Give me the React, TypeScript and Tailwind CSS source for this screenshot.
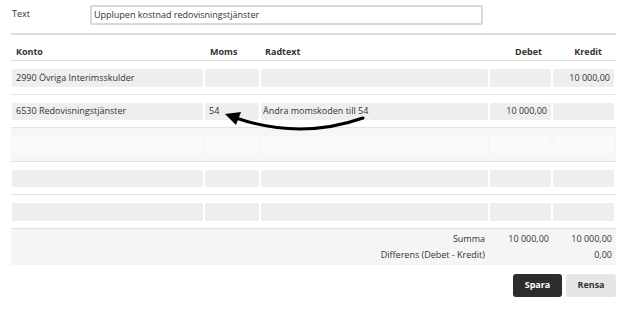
import React from "react";

const grid = "grid grid-cols-[191px_54px_227px_61px_61px] gap-x-[2px] pl-[1px]";

type Row = { cells: string[]; hover?: boolean };

const rows: Row[] = [
  { cells: ["2990 Övriga Interimsskulder", "", "", "", "10 000,00"] },
  { cells: ["6530 Redovisningstjänster", "54", "Ändra momskoden till 54", "10 000,00", ""] },
  { cells: ["", "", "", "", ""], hover: true },
  { cells: ["", "", "", "", ""] },
  { cells: ["", "", "", "", ""] },
];

const cellPad = ["pl-[4px]", "pl-[4px]", "pl-[2px]", "pr-[4px] justify-end", "pr-[4px] justify-end"];

export default function App() {
  return (
    <div
      className="relative w-[627px] h-[309px] bg-white text-[#333] text-[9px] leading-[12px] px-[11px] pt-[5px]"
      style={{ fontFamily: '"Open Sans", "Noto Sans", Arial, sans-serif' }}
    >
      {/* Text field */}
      <div className="flex items-center h-[20px]">
        <div className="w-[79px] pl-[1px] -mt-[3px]">Text</div>
        <div className="w-[393px] h-[20px] border-2 border-[#dadada] rounded-[2px] flex items-center pl-[2px] text-[9px]">
          Upplupen kostnad redovisningstjänster
        </div>
      </div>

      {/* Table */}
      <div className="mt-[8px] border-t-2 border-[#dcdcdc]">
        <div className={`${grid} h-[26px] items-end pb-[2px] border-b border-[#dddddd] font-bold`}>
          <div className="pl-[4px]">Konto</div>
          <div className="pl-[5px]">Moms</div>
          <div className="pl-[4px]">Radtext</div>
          <div className="text-right pr-[9px]">Debet</div>
          <div className="text-right pr-[12px]">Kredit</div>
        </div>

        {rows.map((r, i) => (
          <div
            key={i}
            className={`h-[33.6px] flex items-center border-b border-[#e2e2e2] ${r.hover ? "bg-[#f6f6f6]" : ""}`}
          >
            <div className={`${grid} w-full pt-[1px]`}>
              {r.cells.map((c, j) => (
                <div
                  key={j}
                  className={`h-[17.6px] rounded-[2px] flex items-center ${r.hover ? "bg-[#fafafa]" : "bg-[#eeeeee]"} ${cellPad[j]}`}
                >
                  {c}
                </div>
              ))}
            </div>
          </div>
        ))}

        {/* Footer */}
        <div className={`${grid} bg-[#f5f5f5] pt-[2px] pb-[2px] leading-[16px]`}>
          <div />
          <div />
          <div className="text-right pr-[3px]">Summa</div>
          <div className="text-right pr-[2px]">10 000,00</div>
          <div className="text-right pr-[2px]">10 000,00</div>
          <div />
          <div />
          <div className="text-right pr-[3px]">Differens (Debet - Kredit)</div>
          <div />
          <div className="text-right pr-[2px]">0,00</div>
        </div>
      </div>

      {/* Buttons */}
      <div className="mt-[9px] flex justify-end gap-[4px]">
        <button className="w-[49px] h-[23px] rounded-[3px] bg-[#2d2d2d] text-white font-bold text-[9px]">
          Spara
        </button>
        <button className="w-[50px] h-[23px] rounded-[3px] bg-[#e6e6e6] text-[#333] font-bold text-[9px]">
          Rensa
        </button>
      </div>

      {/* Arrow annotation */}
      <svg className="absolute inset-0 pointer-events-none" width="627" height="309" viewBox="0 0 627 309">
        <path d="M363 118 Q300 140 236 118" fill="none" stroke="#000" strokeWidth="3" strokeLinecap="round" />
        <polygon points="225,114 241,112 236,125" fill="#000" />
      </svg>
    </div>
  );
}
